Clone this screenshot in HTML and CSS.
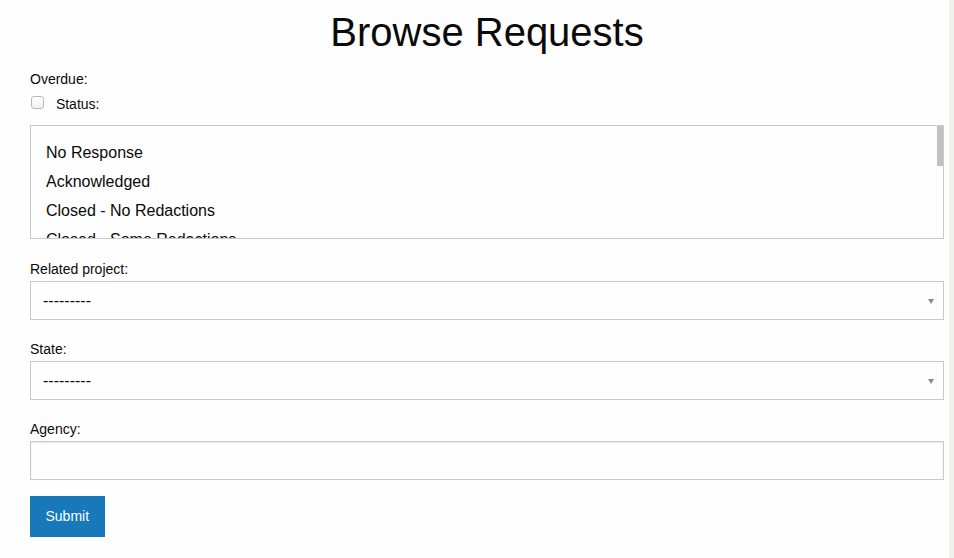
FILE: index.html
```
<!DOCTYPE html>
<html lang="en">
<head>
  <meta charset="UTF-8">
  <meta name="viewport" content="width=device-width, initial-scale=1">
  <title>Browse Requests</title>
  <link rel="stylesheet" href="styles.css">
</head>
<body>

  <main class="page">
    <h1 class="page-title">Browse Requests</h1>

    <form class="filter-form" action="#" method="get">
      <label class="field-label" for="id_overdue">Overdue:</label>
      <div class="check-row">
        <input type="checkbox" class="check" id="id_overdue" name="overdue">
        <label class="check-label" for="id_status">Status:</label>
      </div>

      <div class="multi-wrap">
        <select class="field field-multi" id="id_status" name="status" multiple>
          <option>No Response</option>
          <option>Acknowledged</option>
          <option>Closed - No Redactions</option>
          <option>Closed - Some Redactions</option>
          <option>Closed - Rejected</option>
          <option>Closed - No Responsive Records</option>
          <option>Appealing</option>
          <option>Fix Required</option>
          <option>Payment Required</option>
          <option>Abandoned</option>
        </select>
      </div>

      <label class="field-label" for="id_project">Related project:</label>
      <div class="select-wrap">
        <select class="field field-select" id="id_project" name="project">
          <option>---------</option>
        </select>
      </div>

      <label class="field-label" for="id_state">State:</label>
      <div class="select-wrap">
        <select class="field field-select" id="id_state" name="state">
          <option>---------</option>
        </select>
      </div>

      <label class="field-label" for="id_agency">Agency:</label>
      <input type="text" class="field field-text" id="id_agency" name="agency">

      <button type="submit" class="btn">Submit</button>
    </form>
  </main>

</body>
</html>
```

FILE: styles.css
```
* {
  box-sizing: border-box;
}
html, body {
  margin: 0;
  padding: 0;
}
body {
  min-height: 100vh;
  background: #fefefe;
  border-right: 5px solid #f1f0ee;
  color: #0a0a0a;
  font-family: "Liberation Sans", Arial, Helvetica, sans-serif;
  font-size: 16px;
  line-height: 1.5;
}
.page {
  padding: 0 5px 0 30px;
}
.page-title {
  margin: 0 0 7px;
  padding-top: 4px;
  font-size: 40px;
  font-weight: normal;
  line-height: 56px;
  text-align: center;
}
.field-label {
  display: block;
  font-size: 14px;
  line-height: 25.2px;
}
/* labels under a field sit a little lower */
.field-label:not(:first-child) {
  padding-top: 3.5px;
  line-height: 21.7px;
}
.check-row {
  font-size: 14px;
  line-height: 25.2px;
}
.check {
  appearance: none;
  -webkit-appearance: none;
  width: 13px;
  height: 13px;
  margin: 0 0 0 1px;
  vertical-align: baseline;
  border: 1px solid #b9b9b9;
  border-radius: 3px;
  background: linear-gradient(#ffffff, #f0f0f0);
}
.check:checked {
  background: #1779ba;
  border-color: #1779ba;
}
.check-label {
  margin-left: 8px;
}
.field {
  display: block;
  width: 100%;
  margin: 0 0 16px;
  border: 1px solid #cacaca;
  border-radius: 0;
  background: #fefefe;
  color: #0a0a0a;
  font-family: inherit;
  font-size: 16px;
  outline: none;
}
.multi-wrap {
  position: relative;
  margin: 8px 0 16px;
}
/* scroll thumb of the status list */
.multi-wrap::after {
  content: "";
  position: absolute;
  top: 1px;
  right: 1px;
  width: 6px;
  height: 40px;
  background: #c1c1c1;
  pointer-events: none;
}
.field-multi {
  height: 114px;
  margin: 0;
  padding: 12px 15px;
  overflow-y: auto;
}
.field-multi option {
  padding: 6px 0 5px;
}
.select-wrap {
  position: relative;
  margin-bottom: 16px;
}
.select-wrap::after {
  content: "";
  position: absolute;
  top: 18px;
  right: 10px;
  border-left: 3.5px solid transparent;
  border-right: 3.5px solid transparent;
  border-top: 5px solid #8a8a8a;
  pointer-events: none;
}
.field-select {
  appearance: none;
  -webkit-appearance: none;
  height: 39px;
  margin: 0;
  padding: 0 24px 0 12px;
  line-height: normal;
}
.field-text {
  height: 39px;
  padding: 8px;
  box-shadow: inset 0 1px 2px rgba(10, 10, 10, 0.1);
}
.btn {
  display: inline-block;
  padding: 13px 15.5px;
  border: none;
  border-radius: 0;
  background: #1779ba;
  color: #fefefe;
  font-family: inherit;
  font-size: 14px;
  line-height: 15px;
  cursor: pointer;
}
.btn:hover {
  background: #14679e;
}
```
